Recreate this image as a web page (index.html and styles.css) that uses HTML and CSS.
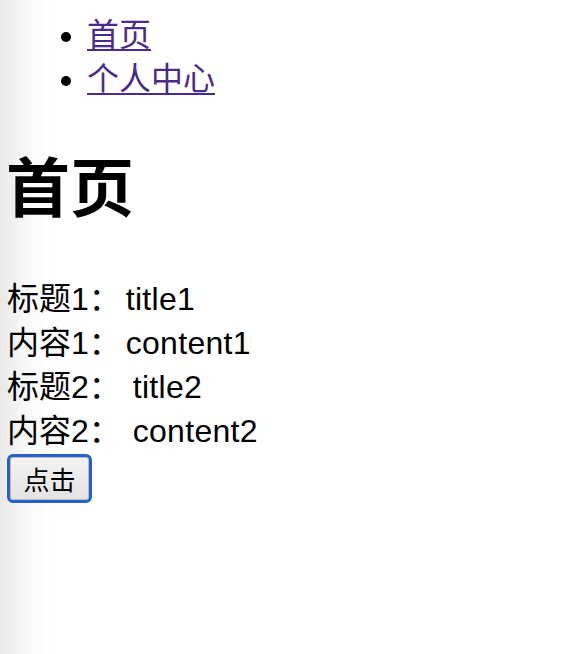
FILE: index.html
```html
<!DOCTYPE html>
<html lang="zh">

<head>
    <meta charset="UTF-8" />
    <meta name="viewport" content="width=device-width, initial-scale=1.0" />
    <title>首页</title>
    <link rel="stylesheet" href="styles.css">
</head>

<body>
    <ul class="nav">
        <li><a href="#">首页</a></li>
        <li><a href="#">个人中心</a></li>
    </ul>

    <h1>首页</h1>

    <div class="item">
        <div>标题1： <span>title1</span></div>
        <div>内容1： <span>content1</span></div>
    </div>
    <div class="item">
        <div>标题2： <span class="wide">title2</span></div>
        <div>内容2： <span class="wide">content2</span></div>
    </div>

    <button class="btn">点击</button>
</body>

</html>
```
FILE: styles.css
```css
html,
body {
    margin: 0;
    padding: 0;
}

body {
    padding: 0 8px 0 7px;
    min-height: 654px;
    background: linear-gradient(90deg, #e9e9e9 0, #f7f7f7 22px, #fff 50px);
    font-family: "Liberation Sans", "Noto Sans CJK SC", sans-serif;
    font-size: 32px;
    line-height: 44px;
    color: #000;
}

.nav {
    margin: 13px 0 0;
    padding-left: 80px;
}

.nav a {
    color: #4b2a8c;
    text-decoration: underline;
    text-decoration-thickness: 2px;
    text-underline-offset: 3px;
}

h1 {
    margin: 43px 0;
    margin-left: -1px;
    font-size: 64px;
    line-height: 90px;
    font-weight: 700;
}

.item span {
    margin-left: -4px;
    letter-spacing: .3px;
}

.item span.wide {
    margin-left: 3px;
}

.btn {
    display: block;
    margin: 1px 0 0;
    width: 85px;
    height: 49px;
    padding: 0;
    border: 3px solid #2662c6;
    border-radius: 6px;
    background: linear-gradient(#f3f3f3, #e3e3e3);
    box-shadow: inset 0 0 0 1px #bdbdbd;
    font-family: "Noto Sans CJK SC", sans-serif;
    font-size: 26px;
    color: #000;
}
```
